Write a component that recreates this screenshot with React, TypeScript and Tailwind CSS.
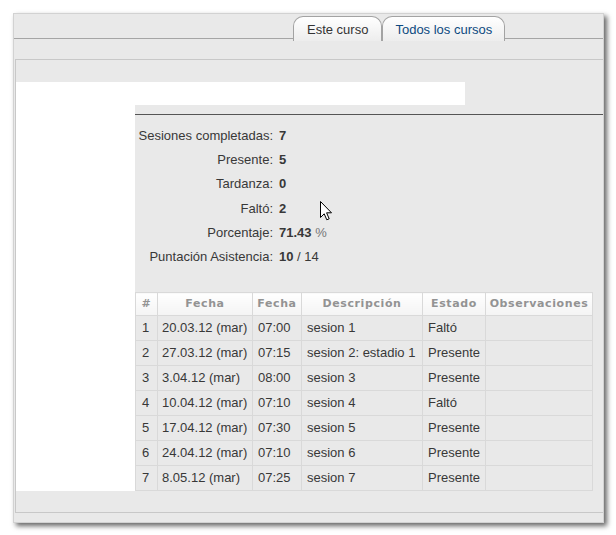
const stats = [
  { label: 'Sesiones completadas:', value: '7' },
  { label: 'Presente:', value: '5' },
  { label: 'Tardanza:', value: '0' },
  { label: 'Faltó:', value: '2' },
];

const rows = [
  ['1', '20.03.12 (mar)', '07:00', 'sesion 1', 'Faltó'],
  ['2', '27.03.12 (mar)', '07:15', 'sesion 2: estadio 1', 'Presente'],
  ['3', '3.04.12 (mar)', '08:00', 'sesion 3', 'Presente'],
  ['4', '10.04.12 (mar)', '07:10', 'sesion 4', 'Faltó'],
  ['5', '17.04.12 (mar)', '07:30', 'sesion 5', 'Presente'],
  ['6', '24.04.12 (mar)', '07:10', 'sesion 6', 'Presente'],
  ['7', '8.05.12 (mar)', '07:25', 'sesion 7', 'Presente'],
];

const headers = ['#', 'Fecha', 'Fecha', 'Descripción', 'Estado', 'Observaciones'];

function Cursor() {
  return (
    <svg className="absolute left-[306px] top-[187px]" width="13" height="20" viewBox="0 0 13 20">
      <path
        d="M0.5 0.5 L0.5 16.5 L4.2 12.8 L6.8 18.8 L9.2 17.8 L6.6 11.8 L11.5 11.8 Z"
        fill="white"
        stroke="black"
        strokeWidth="1"
        strokeLinejoin="miter"
      />
    </svg>
  );
}

export default function App() {
  return (
    <div className="w-[616px] h-[535px] bg-white pt-[13px] pl-[13px] font-['Liberation_Sans',Arial,sans-serif] text-[13px] text-[#383838]">
      <div className="relative w-[591px] h-[510px] border border-[#d2d2d2] bg-[#e9e9e9] shadow-[3px_3px_5px_rgba(0,0,0,0.6)]">
        {/* Tabs */}
        <div className="flex items-end h-[25px] border-b border-[#a5a5a5] pl-[279px]">
          <div className="-mb-[3px] h-[25px] rounded-t-[10px] border border-b-0 border-[#a3a3a3] bg-gradient-to-b from-white to-[#ededed] px-[13px] pt-[2px] leading-[22px] text-[#333]">
            Este curso
          </div>
          <div className="-mb-[3px] h-[25px] rounded-t-[10px] border border-b-0 border-[#a3a3a3] bg-gradient-to-b from-white to-[#ededed] px-[12px] pt-[2px] leading-[22px] text-[#0d4a80]">
            Todos los cursos
          </div>
        </div>

        {/* Content box */}
        <div className="mt-[20px] ml-[1px] border-l border-t border-b border-[#c8c8c8] pt-[22px] pb-[21px]">
          <div className="h-[23px] w-[449px] bg-white" />
          <div className="flex">
            <div className="w-[119px] bg-white" />
            <div className="flex-1">
              <div className="mt-[9px] border-t border-[#555]" />
              <div className="pt-[9px] grid grid-cols-[138px_auto] leading-[24.2px]">
                {stats.map((s) => (
                  <div key={s.label} className="contents">
                    <div className="text-right">{s.label}</div>
                    <div className="pl-[6px] font-bold">{s.value}</div>
                  </div>
                ))}
                <div className="text-right">Porcentaje:</div>
                <div className="pl-[6px]">
                  <span className="font-bold">71.43</span> <span className="text-[#777]">%</span>
                </div>
                <div className="text-right">Puntación Asistencia:</div>
                <div className="pl-[6px]">
                  <span className="font-bold">10</span> / 14
                </div>
              </div>

              <table className="mt-[23px] table-fixed border-collapse w-[458px]">
                <colgroup>
                  <col className="w-[22px]" />
                  <col className="w-[95px]" />
                  <col className="w-[49px]" />
                  <col className="w-[121px]" />
                  <col className="w-[63px]" />
                  <col className="w-[107px]" />
                </colgroup>
                <thead>
                  <tr>
                    {headers.map((h, i) => (
                      <th
                        key={i}
                        className="h-[23px] p-0 border border-[#d9d9d9] bg-gradient-to-b from-white to-[#f4f4f4] text-center font-['DejaVu_Sans',Verdana,sans-serif] text-[11px] font-bold tracking-[0.6px] text-[#939393] whitespace-nowrap"
                      >
                        {h}
                      </th>
                    ))}
                  </tr>
                </thead>
                <tbody>
                  {rows.map((r) => (
                    <tr key={r[0]}>
                      <td className="h-[25px] p-0 pl-[6px] border border-[#d9d9d9]">{r[0]}</td>
                      <td className="h-[25px] p-0 pl-[4px] border border-[#d9d9d9] whitespace-nowrap">{r[1]}</td>
                      <td className="h-[25px] p-0 pl-[5px] border border-[#d9d9d9]">{r[2]}</td>
                      <td className="h-[25px] p-0 pl-[5px] border border-[#d9d9d9] whitespace-nowrap">{r[3]}</td>
                      <td className="h-[25px] p-0 pl-[5px] border border-[#d9d9d9]">{r[4]}</td>
                      <td className="h-[25px] p-0 border border-[#d9d9d9]" />
                    </tr>
                  ))}
                </tbody>
              </table>
            </div>
          </div>
        </div>

        <Cursor />
      </div>
    </div>
  );
}
